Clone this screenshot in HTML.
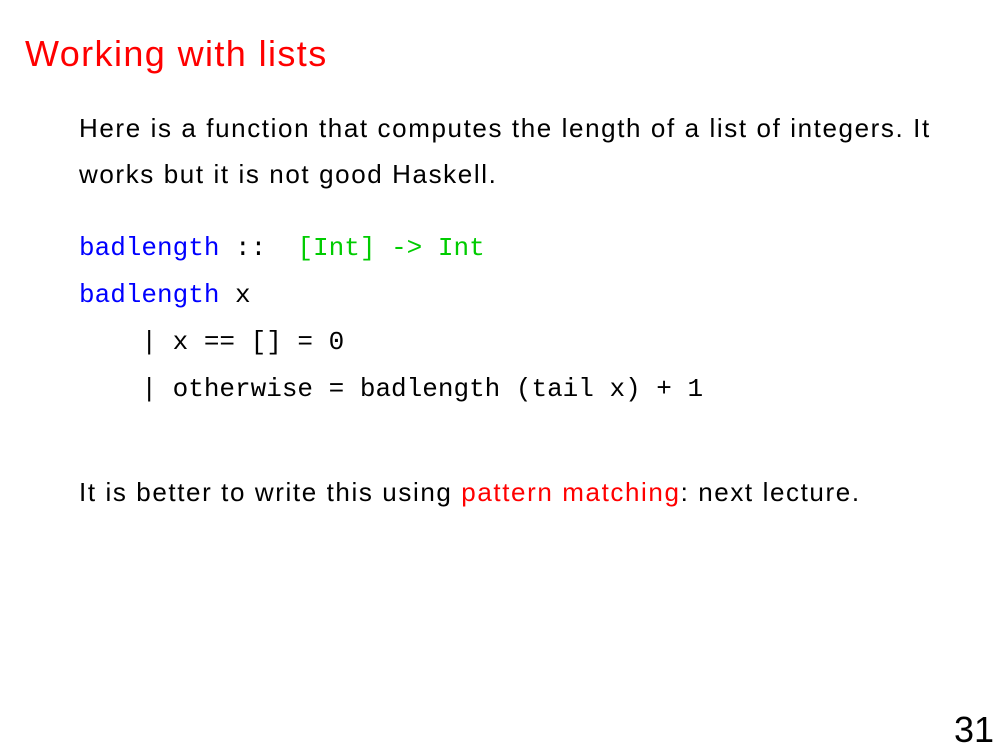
<!DOCTYPE html>
<html><head><meta charset="utf-8"><style>
html,body{margin:0;padding:0;background:#fff;}
body{width:1008px;height:756px;position:relative;overflow:hidden;font-family:"Liberation Sans",sans-serif;color:#000;}
.t{position:absolute;left:25px;top:33px;font-size:36px;color:#f00;letter-spacing:1.4px;}
.p{position:absolute;left:79px;font-size:26px;letter-spacing:1.6px;white-space:nowrap;}
.c{position:absolute;left:79px;font-family:"Liberation Mono",monospace;font-size:26px;white-space:pre;}
.b{color:#00f}.g{color:#0c0}.r{color:#f00}
.n{position:absolute;right:14px;top:709px;font-size:36px;}
</style></head><body>
<div class="t">Working with lists</div>
<div class="p" style="top:113px">Here is a function that computes the length of a list of integers. It</div>
<div class="p" style="top:159px">works but it is not good Haskell.</div>
<div class="c" style="top:233px"><span class="b">badlength</span> ::  <span class="g">[Int] -&gt; Int</span></div>
<div class="c" style="top:280px"><span class="b">badlength</span> x</div>
<div class="c" style="top:327px">    | x == [] = 0</div>
<div class="c" style="top:374px">    | otherwise = badlength (tail x) + 1</div>
<div class="p" style="top:477px">It is better to write this using <span class="r">pattern matching</span>: next lecture.</div>
<div class="n">31</div>
</body></html>
